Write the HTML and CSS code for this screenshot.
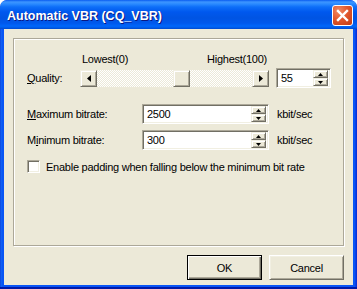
FILE: index.html
```html
<!DOCTYPE html>
<html lang="en">
<head>
  <meta charset="UTF-8">
  <title>Automatic VBR (CQ_VBR)</title>
  <link rel="stylesheet" href="styles.css">
</head>
<body>
  <!-- dialog window -->
  <div class="window">
    <div class="titlebar">
      <span class="title">Automatic VBR (CQ_VBR)</span>
      <div class="close">
        <svg width="19" height="19" viewBox="0 0 19 19">
          <path d="M5 5 L14 14 M14 5 L5 14" stroke="#fff" stroke-width="2.4" stroke-linecap="square"/>
        </svg>
      </div>
    </div>

    <div class="client">
      <div class="group">
        <div class="range-labels">
          <span>Lowest(0)</span>
          <span>Highest(100)</span>
        </div>

        <div class="row quality-row">
          <span class="label narrow"><u>Q</u>uality:</span>
          <div class="scrollbar">
            <div class="raised sb-btn">
              <svg width="4" height="7" viewBox="0 0 4 7"><path d="M4 0 L0 3.5 L4 7 Z" fill="#000"/></svg>
            </div>
            <div class="track">
              <div class="raised thumb" style="--v: 0.55"></div>
            </div>
            <div class="raised sb-btn">
              <svg width="4" height="7" viewBox="0 0 4 7"><path d="M0 0 L4 3.5 L0 7 Z" fill="#000"/></svg>
            </div>
          </div>
          <div class="edit spin">
            <span class="value">55</span>
            <div class="spin-btns">
              <div class="raised spin-btn"><svg width="5" height="3" viewBox="0 0 5 3"><path d="M0 3 L2.5 0 L5 3 Z" fill="#000"/></svg></div>
              <div class="raised spin-btn"><svg width="5" height="3" viewBox="0 0 5 3"><path d="M0 0 L2.5 3 L5 0 Z" fill="#000"/></svg></div>
            </div>
          </div>
        </div>

        <div class="row bitrate-row first">
          <span class="label wide"><u>M</u>aximum bitrate:</span>
          <div class="edit bitrate">
            <span class="value">2500</span>
            <div class="spin-btns">
              <div class="raised spin-btn"><svg width="5" height="3" viewBox="0 0 5 3"><path d="M0 3 L2.5 0 L5 3 Z" fill="#000"/></svg></div>
              <div class="raised spin-btn"><svg width="5" height="3" viewBox="0 0 5 3"><path d="M0 0 L2.5 3 L5 0 Z" fill="#000"/></svg></div>
            </div>
          </div>
          <span class="unit">kbit/sec</span>
        </div>

        <div class="row bitrate-row">
          <span class="label wide">M<u>i</u>nimum bitrate:</span>
          <div class="edit bitrate">
            <span class="value">300</span>
            <div class="spin-btns">
              <div class="raised spin-btn"><svg width="5" height="3" viewBox="0 0 5 3"><path d="M0 3 L2.5 0 L5 3 Z" fill="#000"/></svg></div>
              <div class="raised spin-btn"><svg width="5" height="3" viewBox="0 0 5 3"><path d="M0 0 L2.5 3 L5 0 Z" fill="#000"/></svg></div>
            </div>
          </div>
          <span class="unit">kbit/sec</span>
        </div>

        <label class="check-row">
          <span class="checkbox"></span>
          <span>Enable padding when falling below the minimum bit rate</span>
        </label>
      </div>

      <div class="buttons">
        <div class="btn default">OK</div>
        <div class="btn">Cancel</div>
      </div>
    </div>
  </div>
</body>
</html>
```

FILE: styles.css
```css
body {
  margin: 0;
  background: #fff;
  font-family: "Liberation Sans", Arial, sans-serif;
  font-size: 11px;
  letter-spacing: -0.25px;
  color: #000;
}

/* window frame */
.window {
  width: 357px;
  height: 289px;
  display: flex;
  flex-direction: column;
  background: linear-gradient(to right, #0831D9 0, #166AEE 1px, #0855F5 2px, #0855F5 355px, #0831D9 356px);
  border-radius: 7px 7px 0 0;
  overflow: hidden;
  box-shadow: inset 0 -2px 0 #0019A8;
}

.titlebar {
  height: 29px;
  flex-shrink: 0;
  display: flex;
  align-items: flex-start;
  padding-left: 7px;
  background: linear-gradient(#0A5CF0 0, #3D95FF 2px, #2A8AFF 4px, #0D6EF8 7px, #0058EE 12px, #0054E3 18px, #0058EC 23px, #0066FA 26px, #0062F2 27px, #0049D0 29px);
  border-radius: 7px 7px 0 0;
}

.title {
  margin-top: 9px;
  font-family: "Liberation Sans", Arial, sans-serif;
  font-weight: bold;
  font-size: 12.5px;
  line-height: 15px;
  letter-spacing: 0;
  color: #fff;
  text-shadow: 1px 1px 0 #0A1883;
}

.close {
  margin: 5px 4px 0 auto;
  width: 19px;
  height: 19px;
  border: 1px solid #fff;
  border-radius: 3px;
  background: radial-gradient(circle at 30% 25%, #F08A64 0, #E2582E 45%, #C03A14 100%);
}

.close svg {
  display: block;
}

/* client area */
.client {
  flex: 1;
  margin: 0 4px 4px;
  background: #ECE9D8;
  padding: 9px 9px 0;
}

/* group box */
.group {
  height: 208px;
  box-sizing: border-box;
  border: 1px solid #ACA899;
  box-shadow: inset 1px 1px 0 #fff, 1px 1px 0 #fff;
  padding: 14px 0 0 13px;
}

.range-labels {
  width: 185px;
  margin-left: 53px;
  padding: 0 2px;
  display: flex;
  justify-content: space-between;
  line-height: 13px;
}

.row {
  display: flex;
  align-items: center;
  height: 20px;
}

.quality-row {
  margin-top: 2px;
}

.bitrate-row {
  margin-top: 6px;
}

.bitrate-row.first {
  margin-top: 16px;
}

.label.narrow {
  width: 53px;
}

.label.wide {
  width: 115px;
}

.unit {
  margin-left: 8px;
}

/* raised 3d surface */
.raised {
  box-sizing: border-box;
  background: #ECE9D8;
  border: 1px solid;
  border-color: #F1EFE2 #716F64 #716F64 #F1EFE2;
  box-shadow: inset 1px 1px 0 #fff, inset -1px -1px 0 #ACA899;
  display: flex;
  align-items: center;
  justify-content: center;
}

/* scrollbar slider */
.scrollbar {
  width: 189px;
  height: 17px;
  display: flex;
}

.sb-btn {
  width: 17px;
  height: 17px;
  flex-shrink: 0;
}

.track {
  flex: 1;
  position: relative;
  background: repeating-conic-gradient(#fff 0 25%, #ECE9D8 0 50%) 0 0 / 2px 2px;
}

.thumb {
  position: absolute;
  top: 0;
  left: calc((100% - 17px) * var(--v));
  width: 17px;
  height: 17px;
}

/* edit boxes */
.edit {
  box-sizing: border-box;
  height: 20px;
  background: #fff;
  border: 1px solid;
  border-color: #ACA899 #fff #fff #ACA899;
  box-shadow: inset 1px 1px 0 #716F64, inset -1px -1px 0 #F1EFE2;
  padding: 2px 2px 2px 4px;
  display: flex;
  align-items: center;
}

.edit .value {
  flex: 1;
}

.spin {
  width: 55px;
  margin-left: 7px;
}

.bitrate {
  width: 127px;
}

.spin-btns {
  width: 15px;
  height: 16px;
  display: flex;
  flex-direction: column;
}

.spin-btn {
  height: 8px;
}

/* checkbox */
.check-row {
  margin-top: 10px;
  display: flex;
  align-items: center;
  gap: 6px;
  height: 13px;
}

.checkbox {
  width: 13px;
  height: 13px;
  box-sizing: border-box;
  background: #fff;
  border: 1px solid;
  border-color: #ACA899 #fff #fff #ACA899;
  box-shadow: inset 1px 1px 0 #716F64, inset -1px -1px 0 #F1EFE2;
}

/* dialog buttons */
.buttons {
  margin-top: 9px;
  display: flex;
  justify-content: flex-end;
  gap: 7px;
}

.btn {
  width: 75px;
  height: 25px;
  box-sizing: border-box;
  display: flex;
  align-items: center;
  justify-content: center;
  background: #ECE9D8;
  border: 1px solid;
  border-color: #fff #716F64 #716F64 #fff;
  box-shadow: inset 1px 1px 0 #F1EFE2, inset -1px -1px 0 #ACA899;
}

.btn.default {
  border: 1px solid #000;
  box-shadow: inset 1px 1px 0 #fff, inset -1px -1px 0 #716F64, inset -2px -2px 0 #ACA899;
}
```
